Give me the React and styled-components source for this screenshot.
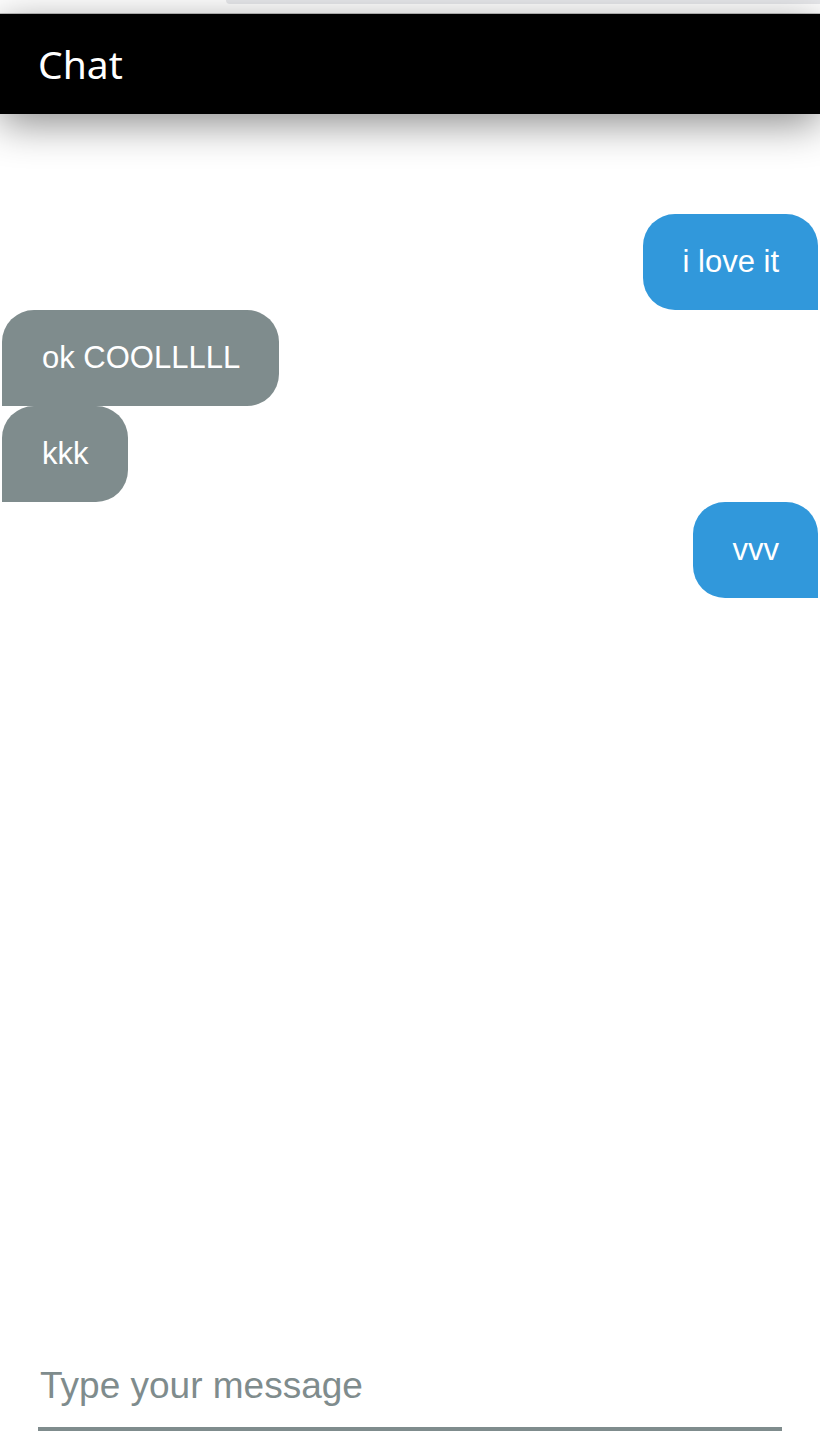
import React, { useState } from 'react'
import styled, { createGlobalStyle } from 'styled-components'

const GlobalStyle = createGlobalStyle`
  html, body {
    margin: 0;
    padding: 0;
    background: #fff;
  }
  #root {
    min-height: 100vh;
  }
`

const messages = [
  { id: 1, text: 'i love it', mine: true },
  { id: 2, text: 'ok COOLLLLL', mine: false },
  { id: 3, text: 'kkk', mine: false },
  { id: 4, text: 'vvv', mine: true },
]

const App = () => {
  const [draft, setDraft] = useState('')
  return (
    <Page>
      <GlobalStyle />
      <BrowserStrip>
        <div className="tab" />
      </BrowserStrip>
      <Header>
        <h1>Chat</h1>
      </Header>
      <MessageList>
        {messages.map(m => (
          <Bubble key={m.id} mine={m.mine}>
            {m.text}
          </Bubble>
        ))}
      </MessageList>
      <Composer>
        <input
          value={draft}
          onChange={e => setDraft(e.target.value)}
          placeholder="Type your message"
        />
      </Composer>
    </Page>
  )
}

const Page = styled.div`
  display: flex;
  flex-direction: column;
  min-height: 100vh;
  font-family: 'Liberation Sans', Arial, sans-serif;
`

const BrowserStrip = styled.div`
  height: 13px;
  background: #fff;
  border-bottom: 1px solid #c4c4c4;
  display: flex;
  justify-content: flex-end;
  .tab {
    width: 594px;
    height: 4px;
    background: #e8e9ec;
    border-bottom-left-radius: 10px;
  }
`

const Header = styled.header`
  position: relative;
  z-index: 1;
  height: 100px;
  background: #000;
  display: flex;
  align-items: center;
  padding: 0 38px;
  box-shadow: 0 10px 40px rgba(0, 0, 0, 0.45);
  h1 {
    margin: 0 0 2px;
    color: #fff;
    font-family: 'Noto Sans', 'DejaVu Sans', sans-serif;
    font-weight: 400;
    font-size: 39px;
    line-height: 1;
  }
`

const MessageList = styled.div`
  flex: 1;
  display: flex;
  flex-direction: column;
  padding: 100px 2px 0;
`

const Bubble = styled.div`
  align-self: ${p => (p.mine ? 'flex-end' : 'flex-start')};
  background: ${p => (p.mine ? '#3198db' : '#7f8c8d')};
  color: #fff;
  font-size: 31px;
  line-height: 36px;
  padding: 30px 39px 30px 40px;
  border-radius: 32px;
  ${p => (p.mine ? 'border-bottom-right-radius: 0;' : 'border-bottom-left-radius: 0;')}
`

const Composer = styled.div`
  padding: 0 38px 11px;
  input {
    display: block;
    width: 744px;
    box-sizing: border-box;
    border: none;
    border-bottom: 4px solid #7f8c8d;
    outline: none;
    padding: 0 2px 20px;
    font-family: 'Liberation Sans', Arial, sans-serif;
    font-size: 37px;
    line-height: 42px;
    color: #333;
    background: transparent;
    &::placeholder {
      color: #7f8c8d;
    }
  }
`

export default App
